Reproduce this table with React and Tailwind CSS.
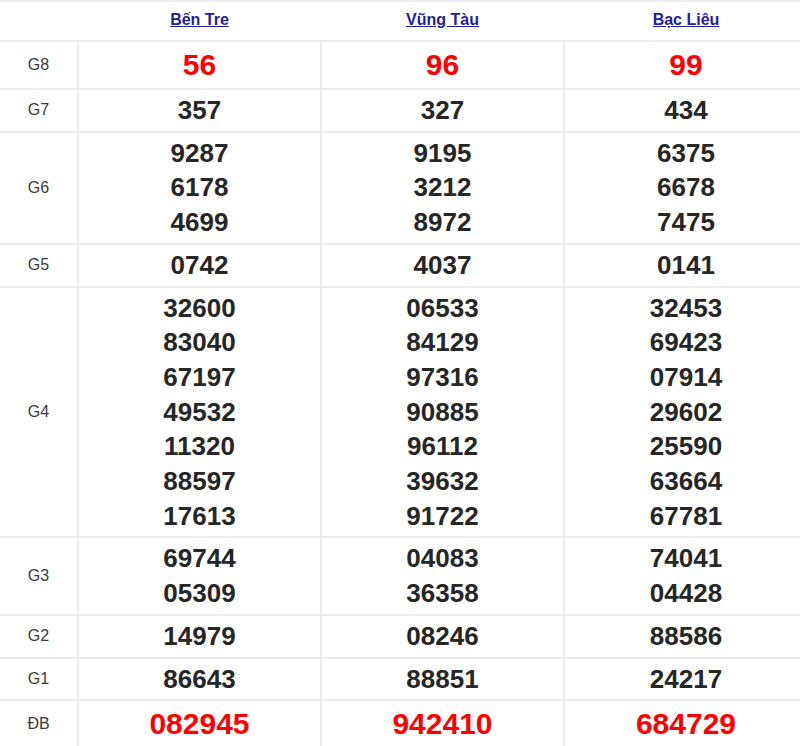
import React from "react";

const provinces = ["Bến Tre", "Vũng Tàu", "Bạc Liêu"];
const rows = [
  { label: "G8", big: true, vals: [["56"], ["96"], ["99"]] },
  { label: "G7", vals: [["357"], ["327"], ["434"]] },
  { label: "G6", vals: [["9287", "6178", "4699"], ["9195", "3212", "8972"], ["6375", "6678", "7475"]] },
  { label: "G5", vals: [["0742"], ["4037"], ["0141"]] },
  {
    label: "G4",
    vals: [
      ["32600", "83040", "67197", "49532", "11320", "88597", "17613"],
      ["06533", "84129", "97316", "90885", "96112", "39632", "91722"],
      ["32453", "69423", "07914", "29602", "25590", "63664", "67781"],
    ],
  },
  { label: "G3", vals: [["69744", "05309"], ["04083", "36358"], ["74041", "04428"]] },
  { label: "G2", vals: [["14979"], ["08246"], ["88586"]] },
  { label: "G1", vals: [["86643"], ["88851"], ["24217"]] },
  { label: "ĐB", big: true, vals: [["082945"], ["942410"], ["684729"]] },
];

export default function App() {
  return (
    <div className="w-full h-[746px] overflow-hidden bg-white" style={{ fontFamily: '"Liberation Sans", Arial, sans-serif' }}>
      <table className="w-[808px] border-collapse table-fixed">
        <colgroup>
          <col className="w-[78px]" />
          <col className="w-[243px]" />
          <col className="w-[243px]" />
          <col className="w-[244px]" />
        </colgroup>
        <thead>
          <tr className="h-[40px] border-t-2 border-b-2 border-[#ececec]">
            <th className="p-0"></th>
            {provinces.map((p) => (
              <th key={p} className="text-center align-middle p-0 pb-[2px]">
                <a href="#" className="text-[16px] font-bold text-[#1f1d9e] underline">
                  {p}
                </a>
              </th>
            ))}
          </tr>
        </thead>
        <tbody>
          {rows.map((r) => (
            <tr key={r.label} className="border-b-2 border-[#ececec]">
              <td className="text-center align-middle text-[16px] text-[#3a3a3a] border-r-2 border-[#ececec]">{r.label}</td>
              {r.vals.map((v, i) => (
                <td key={i} className="text-center align-middle py-[3px] border-r-2 border-[#ececec]">
                  {v.map((n, j) =>
                    r.big ? (
                      <div key={j} className="text-[30px] leading-[40px] font-bold text-[#ff0000]">
                        {n}
                      </div>
                    ) : (
                      <div key={j} className="text-[26px] leading-[34.7px] font-bold text-[#262626]">
                        {n}
                      </div>
                    )
                  )}
                </td>
              ))}
            </tr>
          ))}
        </tbody>
      </table>
    </div>
  );
}
